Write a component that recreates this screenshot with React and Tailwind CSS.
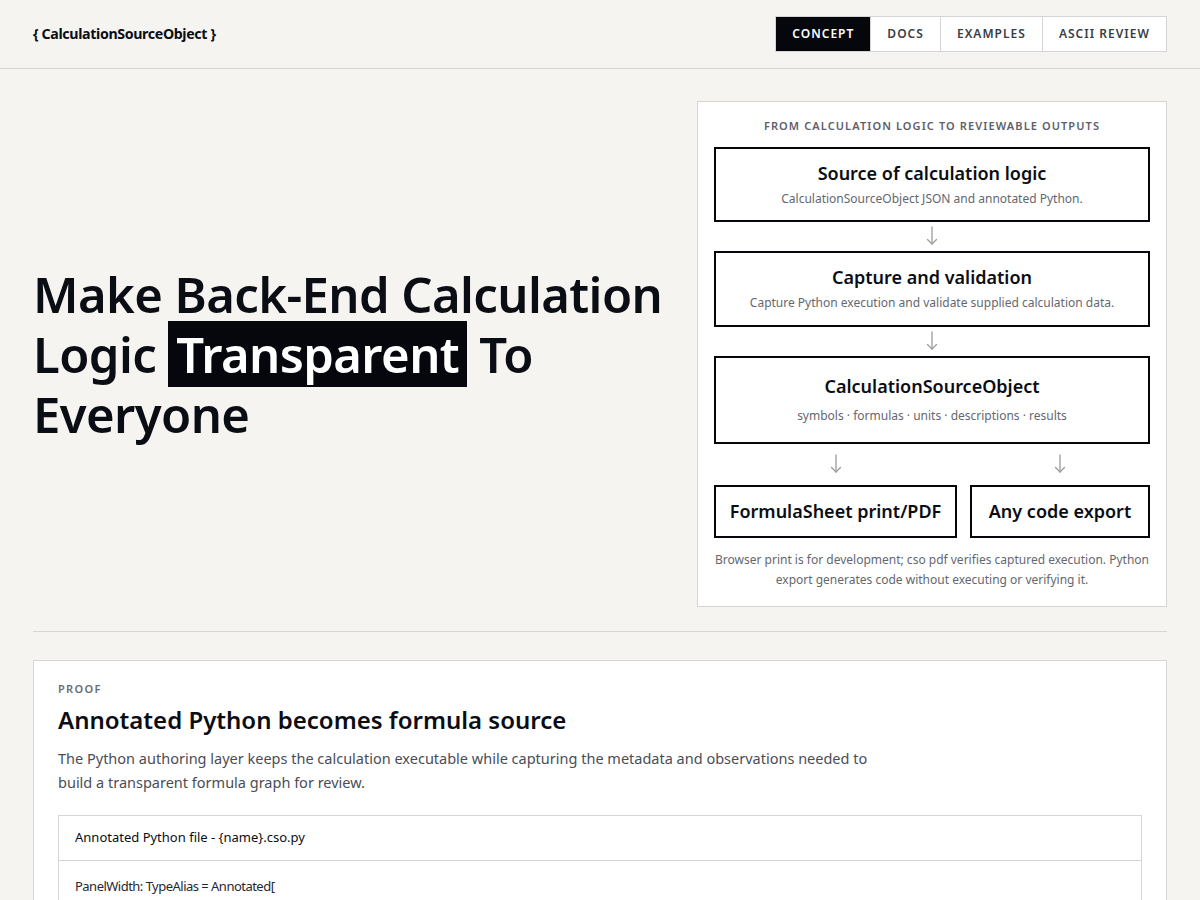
export default function App() {
  const nav = ["Concept", "Docs", "Examples", "ASCII Review"];

  return (
    <div className="min-h-screen bg-[#f5f4f1] text-[#0b0d14]" style={{ fontFamily: '"Noto Sans", "Open Sans", sans-serif' }}>
      {/* Header */}
      <header className="h-[69px] border-b border-[#d6d5d1] px-[33px] flex items-center justify-between">
        <div className="text-[14.2px] font-bold tracking-tight">{"{ CalculationSourceObject }"}</div>
        <nav className="flex border border-[#d4d4d4] bg-white">
          {nav.map((item, i) => (
            <a
              key={item}
              className={
                "h-[34px] px-4 flex items-center text-[12px] font-semibold uppercase tracking-[0.085em] " +
                (i === 0 ? "bg-[#05070d] text-white" : "text-[#3a3d45] border-l border-[#d4d4d4]")
              }
            >
              {item}
            </a>
          ))}
        </nav>
      </header>

      <main className="px-[33px]">
        {/* Hero */}
        <section className="grid grid-cols-[1fr_470px] gap-8 items-center pt-8 pb-6">
          <h1 className="text-[49px] leading-[60px] font-semibold tracking-[-0.012em]">
            Make Back-End Calculation Logic{" "}
            <span className="bg-[#05070d] text-white px-2">Transparent</span> To Everyone
          </h1>

          <div className="bg-white border border-[#d6d5d1] px-4 pt-4 pb-4">
            <div className="text-center text-[11px] font-semibold tracking-[0.1em] text-[#5d606a] uppercase mb-[12px]">
              From calculation logic to reviewable outputs
            </div>

            <div className="border-2 border-[#05070d] h-[75px] flex flex-col items-center justify-center">
              <div className="text-[18px] font-semibold leading-6">Source of calculation logic</div>
              <div className="text-[12px] text-[#646770] mt-[5px]">CalculationSourceObject JSON and annotated Python.</div>
            </div>
            <Arrow />
            <div className="border-2 border-[#05070d] h-[76px] flex flex-col items-center justify-center">
              <div className="text-[18px] font-semibold leading-6">Capture and validation</div>
              <div className="text-[12px] text-[#646770] mt-[5px]">Capture Python execution and validate supplied calculation data.</div>
            </div>
            <Arrow />
            <div className="border-2 border-[#05070d] h-[88px] flex flex-col items-center justify-center">
              <div className="text-[18px] font-semibold leading-6">CalculationSourceObject</div>
              <div className="text-[12px] text-[#646770] mt-[9px]">symbols · formulas · units · descriptions · results</div>
            </div>
            <div className="grid grid-cols-[243px_1fr] gap-x-[13px]">
              <div className="h-[41px] flex items-center justify-center text-[#9a9ca2]">
                <DownArrow />
              </div>
              <div className="h-[41px] flex items-center justify-center text-[#9a9ca2]">
                <DownArrow />
              </div>
              <div className="border-2 border-[#05070d] h-[53px] flex items-center justify-center text-[18px] font-semibold">
                FormulaSheet print/PDF
              </div>
              <div className="border-2 border-[#05070d] h-[53px] flex items-center justify-center text-[18px] font-semibold">
                Any code export
              </div>
            </div>
            <p className="text-center text-[12px] leading-5 text-[#646770] mt-[12px]">
              Browser print is for development; cso pdf verifies captured execution. Python export generates code without executing or verifying it.
            </p>
          </div>
        </section>

        <hr className="border-0 border-t border-[#d6d5d1]" />

        {/* Proof */}
        <section className="mt-7 bg-white border border-[#d6d5d1] px-6 pt-[20px] pb-6">
          <div className="text-[11px] font-semibold tracking-[0.12em] text-[#6a6d75] uppercase">Proof</div>
          <h2 className="text-[24px] font-semibold mt-[7px] leading-8">Annotated Python becomes formula source</h2>
          <p className="text-[14.5px] leading-6 text-[#4a4d55] mt-[10px] max-w-[820px]">
            The Python authoring layer keeps the calculation executable while capturing the metadata and observations needed to build a transparent formula graph for review.
          </p>
          <div className="mt-[21px] border border-[#d6d5d1]">
            <div className="h-[45px] px-4 flex items-center text-[13px] border-b border-[#d6d5d1]">
              Annotated Python file - {"{name}"}.cso.py
            </div>
            <pre className="px-4 py-[13px] text-[13px] leading-6 text-[#262830] tracking-[-0.04em]" style={{ fontFamily: '"Noto Sans", sans-serif' }}>
{`PanelWidth: TypeAlias = Annotated[
    float,
    Symbol("b"),
    Unit("mm"),
    Description("Panel width"),
]`}
            </pre>
          </div>
        </section>
      </main>
    </div>
  );
}

function Arrow() {
  return (
    <div className="h-[29px] flex items-center justify-center text-[#9a9ca2]">
      <DownArrow />
    </div>
  );
}

function DownArrow() {
  return (
    <svg width="12" height="20" viewBox="0 0 12 20" fill="none" stroke="currentColor" strokeWidth="1.3" strokeLinecap="round" strokeLinejoin="round">
      <path d="M6 1v17" />
      <path d="M1.5 13.5L6 18l4.5-4.5" />
    </svg>
  );
}
